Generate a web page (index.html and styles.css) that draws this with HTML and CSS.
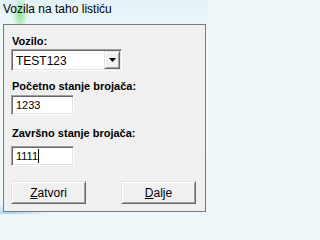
FILE: index.html
```html
<!DOCTYPE html>
<html>
<head>
<meta charset="utf-8">
<link rel="stylesheet" href="styles.css">
</head>
<body>
<div class="window">
  <div class="titlebar">Vozila na taho listiću</div>
  <div class="client">
    <div class="label">Vozilo:</div>
    <div class="combo">
      <span class="combo-text">TEST123</span>
      <span class="combo-btn"><svg width="7" height="4" viewBox="0 0 7 4"><polygon points="0,0 7,0 3.5,4" fill="#000"/></svg></span>
    </div>
    <div class="label l2">Početno stanje brojača:</div>
    <div class="textbox">1233</div>
    <div class="label l3">Završno stanje brojača:</div>
    <div class="textbox tb2">1111<span class="caret"></span></div>
    <div class="buttons">
      <button class="btn"><u>Z</u>atvori</button>
      <button class="btn"><u>D</u>alje</button>
    </div>
  </div>
</div>
</body>
</html>
```
FILE: styles.css
```css
html, body {
  margin: 0;
  padding: 0;
}
html {
  background: #eef6fa;
}
body {
  width: 208px;
  height: 214px;
  overflow: hidden;
  font-family: "Liberation Sans", Arial, sans-serif;
  color: #000;
}
.window {
  width: 208px;
  height: 214px;
  background:
    radial-gradient(ellipse 8px 18px at 20px 14px, rgba(110, 225, 110, 0.75), rgba(110, 225, 110, 0) 100%),
    radial-gradient(ellipse 40px 10px at 10px 214px, rgba(150, 200, 240, 0.8), rgba(150, 200, 240, 0) 100%),
    linear-gradient(to bottom, #e2f2f6 0%, #eef8fb 12%, #f4fafc 40%, #eef6fa 100%);
}
.titlebar {
  height: 23px;
  padding: 1px 0 0 3px;
  font-size: 12px;
  line-height: 16px;
}
.client {
  box-sizing: border-box;
  margin-left: 3px;
  width: 203px;
  height: 188px;
  border: 1px solid #7a7a7a;
  background: #f0f0f0;
  padding: 10px 0 0 7px;
}
.label {
  font-weight: bold;
  font-size: 11px;
  line-height: 13px;
  padding-left: 1px;
  white-space: nowrap;
}
.l2 {
  margin-top: 9px;
}
.l3 {
  margin-top: 12px;
}
.combo {
  box-sizing: border-box;
  margin-top: 1px;
  width: 111px;
  height: 22px;
  display: flex;
  align-items: stretch;
  background: #fff;
  border: 1px solid;
  border-color: #a0a0a0 #ffffff #ffffff #a0a0a0;
  box-shadow: inset 1px 1px 0 #696969, inset -1px -1px 0 #e3e3e3;
  padding: 1px;
}
.combo-text {
  flex: 1;
  font-size: 12px;
  line-height: 18px;
  padding: 1px 0 0 3px;
}
.combo-btn {
  box-sizing: border-box;
  width: 16px;
  display: flex;
  align-items: center;
  justify-content: center;
  background: #f0f0f0;
  border: 1px solid;
  border-color: #e3e3e3 #696969 #696969 #e3e3e3;
  box-shadow: inset 1px 1px 0 #ffffff, inset -1px -1px 0 #a0a0a0;
}
.combo-btn svg {
  display: block;
}
.textbox {
  box-sizing: border-box;
  margin-top: 2px;
  width: 63px;
  height: 20px;
  background: #fff;
  border: 1px solid;
  border-color: #a0a0a0 #ffffff #ffffff #a0a0a0;
  box-shadow: inset 1px 1px 0 #696969, inset -1px -1px 0 #e3e3e3;
  padding: 1px 0 0 4px;
  font-size: 11px;
  line-height: 16px;
}
.tb2 {
  margin-top: 6px;
}
.caret {
  display: inline-block;
  width: 1px;
  height: 14px;
  background: #000;
  vertical-align: -3px;
}
.buttons {
  display: flex;
  gap: 35px;
  margin-top: 15px;
}
.btn {
  box-sizing: border-box;
  width: 75px;
  height: 23px;
  margin: 0;
  padding: 0;
  font-family: "Liberation Sans", Arial, sans-serif;
  font-size: 12px;
  line-height: 18px;
  color: #000;
  background: #f0f0f0;
  border: 1px solid;
  border-color: #e3e3e3 #696969 #696969 #e3e3e3;
  box-shadow: inset 1px 1px 0 #ffffff, inset -1px -1px 0 #a0a0a0;
  border-radius: 0;
}
.btn u {
  text-decoration: underline;
}
```
